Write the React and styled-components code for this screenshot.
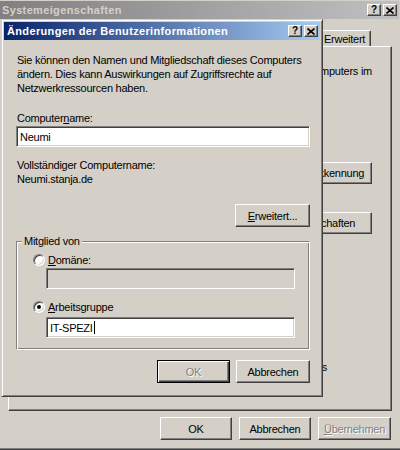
import * as React from 'react'
import styled, { createGlobalStyle } from 'styled-components'

const GlobalStyle = createGlobalStyle`
  html, body {
    margin: 0;
    padding: 0;
    background: #d4d0c8;
    overflow: hidden;
  }
  body {
    font-family: "Liberation Sans", Arial, sans-serif;
    font-size: 11px;
    letter-spacing: -0.25px;
    color: #000;
  }
`

const Desktop = styled.div`
  position: relative;
  width: 400px;
  height: 450px;
  overflow: hidden;
  background: #d4d0c8;
`

// windows sit on the desktop at their own coordinates
const Window = styled.div`
  position: absolute;
  top: ${p => p.$top}px;
  left: ${p => p.$left}px;
  width: ${p => p.$width}px;
  height: ${p => p.$height}px;
  box-sizing: border-box;
  display: flex;
  flex-direction: column;
  padding: 2px;
  background: #d4d0c8;
  border: 1px solid;
  border-color: #d4d0c8 #404040 #404040 #d4d0c8;
  box-shadow: inset 1px 1px #fff, inset -1px -1px #808080;
`

const TitleBar = styled.div`
  flex: none;
  height: 18px;
  display: flex;
  align-items: center;
  padding: 0 2px 0 3px;
  background: ${p =>
    p.$active
      ? 'linear-gradient(to right, #0a246a, #a6caf0)'
      : 'linear-gradient(to right, #808080, #c0c0c0)'};
  color: ${p => (p.$active ? '#fff' : '#d4d0c8')};
  font-weight: bold;
  font-size: 11px;
  letter-spacing: 0.35px;
`

const Title = styled.span`
  flex: 1;
  white-space: nowrap;
  overflow: hidden;
`

const CaptionButtons = styled.div`
  display: flex;
  gap: 2px;
`

const CaptionButton = styled.div`
  width: 14px;
  height: 12px;
  box-sizing: border-box;
  display: flex;
  align-items: center;
  justify-content: center;
  background: #d4d0c8;
  border: 1px solid;
  border-color: #fff #404040 #404040 #fff;
  box-shadow: inset -1px -1px #808080;
  color: #000;
  font: bold 10px "Liberation Sans", Arial, sans-serif;
  letter-spacing: 0;
  line-height: 10px;
`

const OuterBody = styled.div`
  flex: 1;
  display: flex;
  flex-direction: column;
  padding-bottom: 7px;
`

// the tabs left of "Erweitert" lie under the dialog
const TabStrip = styled.div`
  flex: none;
  height: 27px;
  display: flex;
  align-items: flex-end;
  padding-left: 323px;
`

const Tab = styled.div`
  width: ${p => p.$w}px;
  height: 16px;
  box-sizing: border-box;
  padding: 2px 0 0 1px;
  border: 1px solid;
  border-bottom: none;
  border-color: #fff #404040 transparent #fff;
  border-radius: 2px 2px 0 0;
  box-shadow: inset -1px 0 #808080;
  white-space: nowrap;
  overflow: hidden;
`

const Panel = styled.div`
  flex: 1;
  margin: 0 7px 0 9px;
  border: 1px solid;
  border-color: #fff #404040 #404040 #fff;
  box-shadow: inset -1px -1px #808080;
  display: flex;
  flex-direction: column;
  align-items: flex-end;
  padding: 17px 19px 0 0;
  line-height: 14px;
`

const PanelLine = styled.div`
  white-space: nowrap;
  text-align: right;
  margin: ${p => p.$gap || 0}px ${p => p.$inset || 0}px 0 0;
`

const ButtonRow = styled.div`
  display: flex;
  justify-content: flex-end;
  gap: ${p => p.$gap}px;
  margin: ${p => p.$top}px ${p => p.$right}px 0 0;
`

const Button = styled.button`
  width: ${p => p.$w}px;
  height: ${p => p.$h || 23}px;
  margin-top: ${p => p.$gap || 0}px;
  box-sizing: border-box;
  padding: 0;
  display: flex;
  align-items: center;
  justify-content: center;
  font: inherit;
  letter-spacing: inherit;
  white-space: nowrap;
  overflow: hidden;
  background: #d4d0c8;
  color: ${p => (p.$disabled ? '#808080' : '#000')};
  text-shadow: ${p => (p.$disabled ? '1px 1px #fff' : 'none')};
  border: 1px solid;
  border-color: ${p => (p.$default ? '#000' : '#fff #404040 #404040 #fff')};
  box-shadow: ${p =>
    p.$default
      ? 'inset 1px 1px #fff, inset -1px -1px #404040, inset -2px -2px #808080'
      : 'inset -1px -1px #808080'};
  align-self: ${p => (p.$end ? 'flex-end' : 'auto')};
`

const DialogBody = styled.div`
  flex: 1;
  display: flex;
  flex-direction: column;
  padding: 13px 10px 0 12px;
  line-height: 14px;
`

const Text = styled.div`
  margin-top: ${p => p.$gap || 0}px;
  padding-left: 1px;
  white-space: nowrap;
`

const Edit = styled.div`
  height: 21px;
  box-sizing: border-box;
  margin: ${p => p.$gap || 0}px ${p => p.$right || 0}px 0 ${p => p.$left || 0}px;
  display: flex;
  align-items: center;
  padding: 0 3px;
  background: ${p => (p.$disabled ? '#d4d0c8' : '#fff')};
  border: 1px solid;
  border-color: #808080 #fff #fff #808080;
  box-shadow: inset 1px 1px #404040, inset -1px -1px #d4d0c8;
`

const Caret = styled.span`
  display: inline-block;
  width: 1px;
  height: 13px;
  margin-left: 1px;
  background: #000;
`

const GroupBox = styled.div`
  position: relative;
  margin-top: 14px;
  padding: 11px 14px 11px 0;
  border: 1px solid;
  border-color: #808080 #fff #fff #808080;
  box-shadow: inset 1px 1px #fff, inset -1px -1px #808080;
`

const GroupLegend = styled.span`
  position: absolute;
  top: -8px;
  left: 5px;
  padding: 0 2px;
  background: #d4d0c8;
  line-height: 14px;
`

const RadioRow = styled.div`
  display: flex;
  align-items: center;
  gap: 3px;
  height: 14px;
  margin: ${p => p.$gap || 0}px 0 0 16px;
`

const Radio = styled.span`
  width: 12px;
  height: 12px;
  box-sizing: border-box;
  border-radius: 50%;
  display: flex;
  align-items: center;
  justify-content: center;
  background: #fff;
  border: 1px solid;
  border-color: #808080 #fff #fff #808080;
  box-shadow: inset 1px 1px #404040, inset -1px -1px #d4d0c8;

  &::after {
    content: '';
    width: 4px;
    height: 4px;
    border-radius: 50%;
    background: ${p => (p.$checked ? '#000' : 'transparent')};
  }
`

function CloseGlyph() {
  return (
    <svg width="8" height="7" viewBox="0 0 8 7">
      <path d="M0.5 0.5 L7.5 6.5 M7.5 0.5 L0.5 6.5" stroke="#000" strokeWidth="1.6" />
    </svg>
  )
}

function Caption({ title, active }) {
  return (
    <TitleBar $active={active}>
      <Title>{title}</Title>
      <CaptionButtons>
        <CaptionButton>?</CaptionButton>
        <CaptionButton>
          <CloseGlyph />
        </CaptionButton>
      </CaptionButtons>
    </TitleBar>
  )
}

function SystemProperties() {
  return (
    <Window $top={-2} $left={-4} $width={406} $height={452}>
      <Caption title="Systemeigenschaften" />
      <OuterBody>
        <TabStrip>
          <Tab $w={49}>Erweitert</Tab>
        </TabStrip>
        <Panel>
          <PanelLine>Computers im</PanelLine>
          <Button $w={100} $h={22} $gap={84}>Netzwerkkennung</Button>
          <Button $w={100} $h={22} $gap={28}>Eigenschaften</Button>
          <PanelLine $gap={126} $inset={45}>s</PanelLine>
        </Panel>
        <ButtonRow $gap={7} $top={6} $right={8}>
          <Button $w={72}>OK</Button>
          <Button $w={72}>Abbrechen</Button>
          <Button $w={73} $disabled>
            <span><u>Ü</u>bernehmen</span>
          </Button>
        </ButtonRow>
      </OuterBody>
    </Window>
  )
}

function ChangeIdentityDialog() {
  return (
    <Window $top={19} $left={1} $width={322} $height={378}>
      <Caption title="Änderungen der Benutzerinformationen" active />
      <DialogBody>
        <Text>
          Sie können den Namen und Mitgliedschaft dieses Computers
          <br />
          ändern. Dies kann Auswirkungen auf Zugriffsrechte auf
          <br />
          Netzwerkressourcen haben.
        </Text>
        <Text $gap={16}>
          Computer<u>n</u>ame:
        </Text>
        <Edit $gap={1}>Neumi</Edit>
        <Text $gap={11}>Vollständiger Computername:</Text>
        <Text>Neumi.stanja.de</Text>
        <Button $w={75} $gap={18} $end>
          <span><u>E</u>rweitert...</span>
        </Button>
        <GroupBox>
          <GroupLegend>Mitglied von</GroupLegend>
          <RadioRow>
            <Radio />
            <span><u>D</u>omäne:</span>
          </RadioRow>
          <Edit $gap={1} $left={29} $disabled />
          <RadioRow $gap={11}>
            <Radio $checked />
            <span><u>A</u>rbeitsgruppe</span>
          </RadioRow>
          <Edit $gap={3} $left={29}>
            IT-SPEZI
            <Caret />
          </Edit>
        </GroupBox>
        <ButtonRow $gap={6} $top={10} $right={0}>
          <Button $w={73} $default $disabled>OK</Button>
          <Button $w={74}>Abbrechen</Button>
        </ButtonRow>
      </DialogBody>
    </Window>
  )
}

export default function App() {
  return (
    <>
      <GlobalStyle />
      <Desktop>
        <SystemProperties />
        <ChangeIdentityDialog />
      </Desktop>
    </>
  )
}
